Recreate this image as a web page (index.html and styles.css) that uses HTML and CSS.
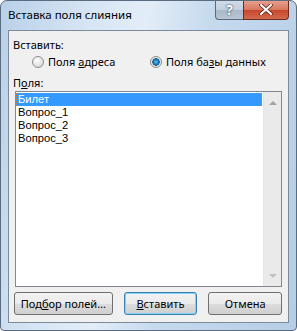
FILE: index.html
```html
<!DOCTYPE html>
<html lang="ru">
<head>
  <meta charset="UTF-8">
  <title>Вставка поля слияния</title>
  <link rel="stylesheet" href="styles.css">
</head>
<body>
  <div class="window">
    <div class="titlebar">
      <span class="title">Вставка поля слияния</span>
      <div class="controls">
        <div class="ctl help">?</div>
        <div class="ctl close">
          <svg width="14" height="11" viewBox="0 0 14 11">
            <path d="M2 1 L12 10 M12 1 L2 10" stroke="#5a2a20" stroke-width="3.6" stroke-linecap="round"/>
            <path d="M2 1 L12 10 M12 1 L2 10" stroke="#fff" stroke-width="2" stroke-linecap="round"/>
          </svg>
        </div>
      </div>
    </div>

    <div class="client">
      <div class="label">Вставить:</div>
      <div class="radios">
        <label class="radio"><span class="dot"></span><span>Поля <u>а</u>дреса</span></label>
        <label class="radio checked"><span class="dot"></span><span>Поля ба<u>з</u>ы данных</span></label>
      </div>

      <div class="label">П<u>о</u>ля:</div>
      <div class="listbox">
        <ul class="items">
          <li class="selected">Билет</li>
          <li>Вопрос_1</li>
          <li>Вопрос_2</li>
          <li>Вопрос_3</li>
        </ul>
        <div class="scrollbar">
          <span class="arrow up"></span>
          <span class="arrow down"></span>
        </div>
      </div>

      <div class="buttons">
        <button class="btn wide">Под<u>б</u>ор полей…</button>
        <button class="btn default"><u>В</u>ставить</button>
        <button class="btn">Отмена</button>
      </div>
    </div>
  </div>
</body>
</html>
```

FILE: styles.css
```css
body {
  margin: 0;
  font-family: "Noto Sans", "DejaVu Sans", sans-serif;
  font-size: 11px;
  color: #000;
  background: #fff;
}

.window {
  width: 297px;
  height: 331px;
  box-sizing: border-box;
  border: 1px solid #5b6c80;
  border-radius: 7px 7px 4px 4px;
  background: linear-gradient(100deg, #b8d0e8 0%, #d6e5f4 25%, #e2edf8 42%, #c6daee 60%, #b5cde6 100%);
  display: flex;
  flex-direction: column;
  overflow: hidden;
}

.titlebar {
  height: 29px;
  display: flex;
  justify-content: space-between;
  align-items: flex-start;
}

.title {
  padding: 6px 0 0 7px;
  font-size: 11.5px;
  color: #000;
}

.controls {
  display: flex;
  margin-right: 7px;
  margin-top: -1px;
}

.ctl {
  height: 20px;
  display: flex;
  align-items: center;
  justify-content: center;
  border: 1px solid #5a6a7c;
  border-top: none;
  box-sizing: border-box;
}

.help {
  width: 28px;
  border-radius: 0 0 0 4px;
  border-right: none;
  background: linear-gradient(#d2dde9 0%, #c3d0de 50%, #a9b8c9 51%, #b8c6d5 100%);
  color: #fff;
  font-weight: bold;
  font-size: 14px;
  text-shadow: 0 0 2px #34475c, 0 0 1px #34475c;
}

.close {
  width: 46px;
  border-radius: 0 0 4px 0;
  background: linear-gradient(#e8a493 0%, #d9785f 50%, #c5452a 51%, #d46a4d 100%);
  border-color: #6b2d22;
}

.client {
  flex: 1;
  margin: 0 7px 7px 7px;
  border: 1px solid #7d8a99;
  background: #f0f0f0;
  padding: 6px 5px 6px 4px;
  display: flex;
  flex-direction: column;
}

.label {
  line-height: 15px;
}

.radios {
  display: flex;
  padding: 2px 0 6px 19px;
}

.radio {
  display: flex;
  align-items: center;
  gap: 4px;
  line-height: 15px;
}

.radio:first-child {
  width: 118px;
}

.dot {
  width: 10px;
  height: 10px;
  border: 1px solid #8d8d8d;
  border-radius: 50%;
  background: radial-gradient(circle at 40% 35%, #ffffff, #d8d8d8 80%);
}

.checked .dot {
  background: radial-gradient(circle, #5fc1ee 0, #1a79b8 2.5px, #1d5f8e 3.5px, #e6e6e6 4px, #f6f6f6 100%);
}

.listbox {
  flex: 1;
  margin: 1px 1px 0 2px;
  border: 1px solid #828790;
  background: #fff;
  display: flex;
}

.items {
  flex: 1;
  list-style: none;
  margin: 0;
  padding: 1px 0 0 0;
  font-family: "Liberation Sans", Arial, sans-serif;
  font-size: 11.2px;
}

.items li {
  height: 13px;
  line-height: 13px;
  padding-left: 2px;
}

.items li.selected {
  background: #3399ff;
  color: #fff;
  outline: 1px dotted #e07a20;
  outline-offset: -1px;
}

.scrollbar {
  width: 17px;
  margin-left: 1px;
  background: #eaeaea;
  border-left: 1px solid #e4e4e4;
  display: flex;
  flex-direction: column;
  justify-content: space-between;
  align-items: center;
  padding: 9px 0 8px;
}

.arrow {
  width: 0;
  height: 0;
  border-left: 4px solid transparent;
  border-right: 4px solid transparent;
}

.arrow.up {
  border-bottom: 4px solid #a3a3a3;
}

.arrow.down {
  border-top: 4px solid #c2c2c2;
}

.buttons {
  display: flex;
  gap: 11px;
  margin: 5px 1px 1px 1px;
}

.btn {
  font-family: inherit;
  font-size: 11px;
  height: 23px;
  width: 74px;
  border: 1px solid #707070;
  border-radius: 3px;
  background: linear-gradient(#f2f2f2 0%, #ebebeb 50%, #dddddd 51%, #cfcfcf 100%);
  padding: 0;
  color: #000;
}

.btn.wide {
  width: 99px;
}

.btn.default {
  border-color: #3c7fb1;
  box-shadow: inset 0 0 0 1px #7fd4f5;
}
```
